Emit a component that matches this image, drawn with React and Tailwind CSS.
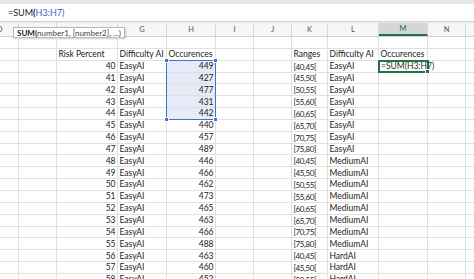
import React from 'react';

const cols = [
  { key: 'D', w: 'w-[38px]' },
  { key: 'E', w: 'w-[38px]' },
  { key: 'F', w: 'w-[61px]' },
  { key: 'G', w: 'w-[49px]' },
  { key: 'H', w: 'w-[49px]' },
  { key: 'I', w: 'w-[38px]' },
  { key: 'J', w: 'w-[38px]' },
  { key: 'K', w: 'w-[36px]' },
  { key: 'L', w: 'w-[51px]' },
  { key: 'M', w: 'w-[49px]' },
  { key: 'N', w: 'w-[38px]' },
  { key: 'O', w: 'w-[40px]' },
];

// E and F letters sit under the SUM tooltip
const hidden = ['E', 'F'];

const occ = [449, 427, 477, 431, 442, 440, 457, 489, 446, 466, 462, 473, 465, 463, 466, 488, 463, 460, 452];
const ranges = ['[40,45[', '[45,50[', '[50,55[', '[55,60[', '[60,65[', '[65,70[', '[70,75[', '[75,80]'];

function rowData(r) {
  if (r === 1) return {};
  if (r === 2)
    return {
      F: { t: 'Risk Percent' },
      G: { t: 'Difficulty AI' },
      H: { t: 'Occurences' },
      K: { t: 'Ranges' },
      L: { t: 'Difficulty AI' },
      M: { t: 'Occurences' },
    };
  const i = r - 3;
  const diff = i < 8 ? 'EasyAI' : i < 16 ? 'MediumAI' : 'HardAI';
  return {
    F: { t: String(40 + i), right: true },
    G: { t: 'EasyAI' },
    H: { t: String(occ[i]), right: true, sel: r <= 7 },
    K: { t: ranges[i % 8], narrow: true },
    L: { t: diff },
  };
}

function Handle({ className }) {
  return <div className={'absolute w-[5px] h-[5px] bg-[#4472c4] border border-white ' + className} />;
}

export default function App() {
  const rows = Array.from({ length: 21 }, (_, k) => k + 1);
  return (
    <div className="w-[474px] h-[279px] overflow-hidden bg-white font-['Lato',sans-serif] text-[#222]">
      <div className="h-[4px] bg-[#e6e6e6]" />
      <div className="h-[18px] flex items-center pl-[8px] text-[9px] border-b border-[#d4d4d4]">
        <span>=SUM</span>
        <span className="font-bold">(</span>
        <span className="text-[#3a62c6]">H3:H7)</span>
      </div>
      <div className="h-[1px] bg-[#e8e8e8]" />

      <div className="relative">
        {/* column headers */}
        <div className="flex -ml-[19px] h-[14px] bg-[#f6f6f6] border-b border-[#cfcfcf] text-[7.5px] text-[#555]">
          {cols.map((c) => (
            <div
              key={c.key}
              className={
                c.w +
                ' shrink-0 flex items-center justify-center pt-[1px] border-r border-[#d8d8d8] ' +
                (c.key === 'M' ? 'bg-[#d6d6d6] text-[#1e6b41] border-b-2 border-b-[#217346]' : '')
              }
            >
              {hidden.includes(c.key) ? '' : c.key}
            </div>
          ))}
        </div>

        {/* tooltip */}
        <div className="absolute left-[13px] top-[4px] h-[11px] px-[3px] flex items-center bg-white border border-[#b8b8b8] shadow-[1px_1px_2px_rgba(0,0,0,0.2)] text-[8px] text-[#444] whitespace-nowrap">
          <span className="font-bold text-[#222]">SUM(</span>
          <span>number1, [number2], ...)</span>
        </div>

        {/* grid */}
        <div className="relative">
          {rows.map((r) => {
            const d = rowData(r);
            return (
              <div key={r} className="flex -ml-[19px] h-[11.85px] text-[8.5px] leading-none">
                {cols.map((c) => {
                  const cell = d[c.key];
                  return (
                    <div
                      key={c.key}
                      className={
                        c.w +
                        ' shrink-0 flex items-end pb-[1px] overflow-visible whitespace-nowrap border-r border-b border-[#e0e0e0] px-[1.5px] ' +
                        (cell && cell.right ? 'justify-end ' : 'justify-start ') +
                        (cell && cell.sel ? 'bg-[#e6ecf7] ' : '') +
                        (cell && cell.narrow ? 'text-[8px] tracking-[-0.4px]' : '')
                      }
                    >
                      {cell ? cell.t : ''}
                    </div>
                  );
                })}
              </div>
            );
          })}

          {/* selection H3:H7 */}
          <div className="absolute left-[166px] top-[23px] w-[50px] h-[60px] border-[1.5px] border-[#4472c4]">
            <Handle className="-left-[3px] -top-[3px]" />
            <Handle className="-right-[3px] -top-[3px]" />
            <Handle className="-left-[3px] -bottom-[3px]" />
            <Handle className="-right-[3px] -bottom-[3px]" />
          </div>

          {/* active cell M3 */}
          <div className="absolute left-[378px] top-[23px] w-[51px] h-[13px] border-2 border-[#217346] bg-white flex items-end pb-[1px] px-[1px] text-[8.5px] leading-none text-[#1f2d22] whitespace-nowrap">
            =SUM(H3:H7)
            <div className="absolute -right-[3px] -bottom-[3px] w-[5px] h-[5px] bg-[#217346] border border-white" />
          </div>
        </div>
      </div>
    </div>
  );
}
